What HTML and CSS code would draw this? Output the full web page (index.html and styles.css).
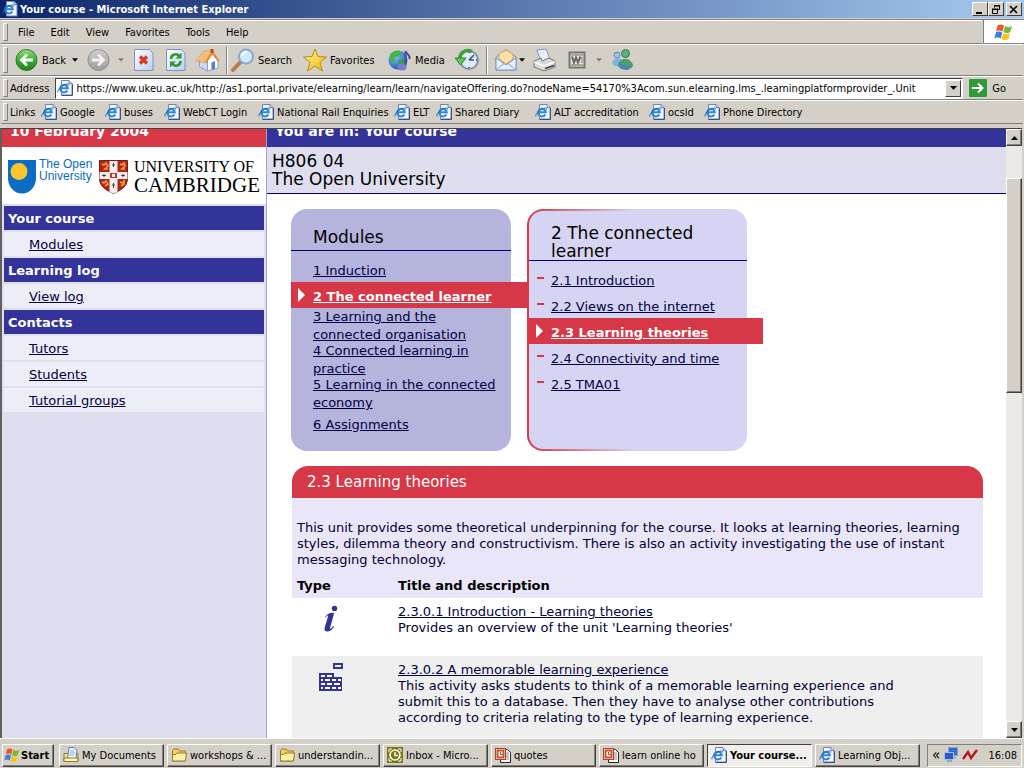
FILE: index.html
```html
<!DOCTYPE html>
<html lang="en">
<head>
    <meta charset="UTF-8">
    <title>Your course - Microsoft Internet Explorer</title>
    <link rel="stylesheet" href="styles.css">
</head>
<body>

    <!-- shared icons -->
    <svg class="defs" width="0" height="0">
        <defs>
            <linearGradient id="gGreen" x1="0" y1="0" x2="0" y2="1"><stop offset="0" stop-color="#8fdc7c"/><stop offset=".5" stop-color="#3fae36"/><stop offset="1" stop-color="#1d7f1c"/></linearGradient>
            <linearGradient id="gGrey" x1="0" y1="0" x2="0" y2="1"><stop offset="0" stop-color="#cfcfcf"/><stop offset="1" stop-color="#9c9c9c"/></linearGradient>
            <linearGradient id="gPage" x1="0" y1="0" x2="1" y2="1"><stop offset="0" stop-color="#fff"/><stop offset="1" stop-color="#b9cdf3"/></linearGradient>
            <linearGradient id="gGold" x1="0" y1="0" x2="1" y2="1"><stop offset="0" stop-color="#fff6a0"/><stop offset="1" stop-color="#f0b400"/></linearGradient>
            <radialGradient id="gGlobe" cx=".35" cy=".3" r=".8"><stop offset="0" stop-color="#7cc4ff"/><stop offset="1" stop-color="#1a4fb4"/></radialGradient>
            <symbol id="ie" viewBox="0 0 16 16">
                <path d="M4.500.5h7.500l3 3v11.500h-10.500z" fill="#f3f7ff" stroke="#6d85bd"/>
                <path d="M12 .5v3h3" fill="#c4d3f2" stroke="#6d85bd"/>
                <path d="M15.500 4v11.500h-11" fill="none" stroke="#35508f"/>
                <path d="M10.300 10.500a3.800 3.800 0 1 1 .500-2.200h-7" fill="none" stroke="#2a86d8" stroke-width="2"/>
                <path d="M1 12.500c-1-2 3-7.500 9.500-8.500 1.200 0 1.500.700 1.200 1.500" fill="none" stroke="#1f63b8"/>
            </symbol>
            <symbol id="flag" viewBox="0 0 20 18">
                <path d="M3.500 2.500c2-1.500 4-1.500 6.500 0l-1.500 6c-2.500-1.500-4.500-1.500-6.500 0z" fill="#e8592b"/>
                <path d="M11 3c2.500 1.500 4.500 1.500 7 0l-1.700 6c-2.300 1.500-4.500 1.500-6.800 0z" fill="#78b832"/>
                <path d="M1.800 9.500c2-1.500 4-1.500 6.500 0l-1.500 6c-2.500-1.500-4.500-1.500-6.500 0z" fill="#3c7fe0"/>
                <path d="M9.200 10c2.500 1.500 4.500 1.500 6.800 0l-1.600 6c-2.400 1.500-4.500 1.500-6.800 0z" fill="#f7c51c"/>
            </symbol>
            <symbol id="folder" viewBox="0 0 16 16">
                <path d="M1.500 14v-10.500l1.500-1.500h4l1.500 2h6v10z" fill="#f3cf5a" stroke="#9c7a20"/>
                <path d="M1.500 14v-6.500h3l1.500-1.500h9.500l-1 8z" fill="#fdf0a8" stroke="#9c7a20"/>
            </symbol>
            <symbol id="ppt" viewBox="0 0 16 16">
                <path d="M5.500 2.500h7l3 3v10h-10z" fill="#fff" stroke="#222"/>
                <path d="M7 6h7M7 8h7M7 10h7M7 12h7" stroke="#888"/>
                <rect x=".5" y="1.500" width="10" height="11" fill="#fff" stroke="#b8401f"/>
                <rect x="2.500" y="3.500" width="6" height="7" fill="none" stroke="#c4512c" stroke-width="2"/>
                <path d="M5.500 5v2.500h2" fill="none" stroke="#b8401f"/>
            </symbol>
            <symbol id="down" viewBox="0 0 7 4"><path d="M0 0h7l-3.500 4z"/></symbol>
        </defs>
    </svg>

    <header class="titlebar">
        <svg class="ic16"><use href="#ie"/></svg>
        <h1>Your course - Microsoft Internet Explorer</h1>
        <div class="winbtns">
            <button class="winbtn" aria-label="Minimize"><svg width="10" height="9"><path d="M1 7h6v2h-6z"/></svg></button>
            <button class="winbtn" aria-label="Restore"><svg width="10" height="9" fill="none" stroke="#000"><path d="M3.500 2.500v-2h5v4h-2M3 1h6"/><path d="M1.500 4.500h5v4h-5zM1 4h6"/></svg></button>
            <button class="winbtn close" aria-label="Close"><svg width="10" height="9"><path d="M1 1l7 7M8 1l-7 7" stroke="#000" stroke-width="1.600"/></svg></button>
        </div>
    </header>

    <div class="menurow">
        <nav class="bar menu">
            <a href="#">File</a>
            <a href="#">Edit</a>
            <a href="#">View</a>
            <a href="#">Favorites</a>
            <a href="#">Tools</a>
            <a href="#">Help</a>
        </nav>
        <div class="brand"><svg width="20" height="18"><use href="#flag"/></svg></div>
    </div>

    <div class="bar toolbar">
        <button class="tool">
            <svg width="24" height="24"><circle cx="11.500" cy="12" r="10.500" fill="url(#gGreen)" stroke="#2c7a2a"/><path d="M18 12h-11M12 6.500l-5.500 5.500 5.500 5.500" fill="none" stroke="#fff" stroke-width="2.800"/></svg>
            Back
        </button>
        <button class="tool" aria-label="Back history"><svg width="6" height="4"><use href="#down"/></svg></button>
        <button class="tool" aria-label="Forward"><svg width="24" height="24"><circle cx="11.500" cy="12" r="10.500" fill="url(#gGrey)" stroke="#8f8f8f"/><path d="M5 12h11M11 6.500l5.500 5.500-5.500 5.500" fill="none" stroke="#f2f2f2" stroke-width="2.800"/></svg></button>
        <button class="tool off" aria-label="Forward history"><svg width="6" height="4"><use href="#down"/></svg></button>
        <button class="tool" aria-label="Stop"><svg width="20" height="24"><path d="M.5 1.500h15l3.500 3.500v17.500h-18.500z" fill="url(#gPage)" stroke="#7e94c4"/><path d="M6 8.500l7 7M13 8.500l-7 7" stroke="#dd3a1c" stroke-width="3.500"/></svg></button>
        <button class="tool" aria-label="Refresh"><svg width="20" height="24"><path d="M.5 1.500h15l3.500 3.500v17.500h-18.500z" fill="url(#gPage)" stroke="#7e94c4"/><path d="M5 11c0-5 6-6 8-3" fill="none" stroke="#2b9a30" stroke-width="2.600"/><path d="M15.500 4.500v6h-6z" fill="#2b9a30"/><path d="M14.500 13c0 5-6 6-8 3" fill="none" stroke="#2b9a30" stroke-width="2.600"/><path d="M4 19.500v-6h6z" fill="#2b9a30"/></svg></button>
        <button class="tool" aria-label="Home"><svg width="24" height="24"><path d="M3.500 11v8l8 4v-10z" fill="#c7d9f6" stroke="#8ca1cb"/><path d="M11.500 23v-11l5-6 5.500 7v7z" fill="#fff" stroke="#8ca1cb"/><path d="M0 12.500l8-9.500 8.500-1-5.500 9-1.500 4z" fill="#f6bf78" stroke="#cf9248" stroke-width=".6"/><path d="M16.500 2l7 10.500-1.500 1.500-5.500-7.500-6 8.500-1.500-1z" fill="#e88f3e"/><path d="M14.500 1h3v4h-3z" fill="#bb4a27"/><path d="M15.500 14.500l3.500-1.500v8l-3.500 1z" fill="#5b7fc9"/></svg></button>
        <i class="sep"></i>
        <button class="tool">
            <svg width="24" height="24"><path d="M2 22l8-8.500" stroke="#b97a4c" stroke-width="4" stroke-linecap="round"/><circle cx="15" cy="8.500" r="7" fill="#d2ebfc" stroke="#86a9cf" stroke-width="2"/><path d="M11 8c0-3 3-4.500 5-4" fill="none" stroke="#fff" stroke-width="2"/></svg>
            Search
        </button>
        <button class="tool">
            <svg width="24" height="24"><path d="M12 1l3 7.500 8.500.500-6.500 5.500 2.500 8.500-7.500-5-7.500 5 2.500-8.500-6.500-5.500 8.500-.500z" fill="url(#gGold)" stroke="#bd8b12"/></svg>
            Favorites
        </button>
        <button class="tool">
            <svg width="24" height="24"><circle cx="10" cy="12" r="9.500" fill="url(#gGlobe)"/><path d="M2 7c3-5 9-5 12-3l-3 4-4 1-1 6-3-1z" fill="#45b83c"/><path d="M11 12l5-1 1 4-4 5-3-2z" fill="#35a539"/><path d="M17.500 18v-15c1 4 5 3 4 8" fill="none" stroke="#454d9f" stroke-width="2"/><ellipse cx="14" cy="19" rx="4.500" ry="3.500" fill="#777dc9"/></svg>
            Media
        </button>
        <button class="tool" aria-label="History"><svg width="24" height="24"><circle cx="14" cy="12" r="9" fill="#dceafa" stroke="#8191a7" stroke-width="2"/><path d="M14 12l5-5M14 12h5" stroke="#3a557e" stroke-width="1.600"/><path d="M14 5v-1M14 20v-1M21 12h1" stroke="#486890" stroke-width="2"/><path d="M17 3.500c-7-3-13 2-12 8" fill="none" stroke="#39a338" stroke-width="3.500"/><path d="M0 10h11l-5.500 7z" fill="#63c65a" stroke="#2c832b"/></svg></button>
        <i class="sep"></i>
        <button class="tool" aria-label="Mail"><svg width="22" height="24"><path d="M1 9l10-7.500 10 7.500v13h-20z" fill="#c7dcf8" stroke="#6e8bc0"/><path d="M4 11v-5l7-4 7 4v5l-7 5z" fill="#ffe0ab" stroke="#e0a050"/><path d="M1 10l10 7 10-7v12h-20z" fill="#e6f2ff" stroke="#7b98cc"/><path d="M1 22l8-6.500M21 22l-8-6.500" stroke="#7b98cc"/></svg></button>
        <button class="tool" aria-label="Mail options"><svg width="6" height="4"><use href="#down"/></svg></button>
        <button class="tool" aria-label="Print"><svg width="24" height="24"><path d="M4 2l9-1 4 10-9 3z" fill="#e5f0ff" stroke="#8297bf"/><path d="M1 13l7-3 1 3 7-3 6 3v6l-11 4-10-4z" fill="#d9d9d9" stroke="#777"/><path d="M1 14l10 4 11-4" fill="none" stroke="#fff" stroke-width="1.500"/><path d="M12 20.500l9-3" stroke="#444" stroke-width="1.500"/></svg></button>
        <button class="tool" aria-label="Edit"><svg width="18" height="18"><rect x="1.500" y="1.500" width="15" height="15" fill="#e2e0da" stroke="#77756f" stroke-width="2"/><path d="M3 4h12M3 14h12M13 7h2M13 9h2M13 11h2" stroke="#77756f"/><path d="M4 5.500l2 6 2-5 2 5 2.500-6" fill="none" stroke="#6a6862" stroke-width="2"/></svg></button>
        <button class="tool off" aria-label="Edit options"><svg width="6" height="4"><use href="#down"/></svg></button>
        <button class="tool" aria-label="Messenger"><svg width="24" height="24"><circle cx="7" cy="7" r="3" fill="#9cc4e8" stroke="#5d8ab5"/><path d="M2 15c0-5 9-7 11-1l-4 4c-3 0-6 0-7-3z" fill="#7fb1db"/><circle cx="15.500" cy="5.500" r="4" fill="#62ad7c" stroke="#357b50"/><path d="M8 19c0-10 12-11 15-2 0 5-10 6-15 2z" fill="#4e9d75"/><path d="M9 14c3 4 8 5 12 4l-3 4-7-1z" fill="#4c80b9"/></svg></button>
    </div>

    <form class="bar address">
        <label for="url">Address</label>
        <div class="combo">
            <svg class="ic16"><use href="#ie"/></svg>
            <input type="text" id="url" value="https://www.ukeu.ac.uk/http://as1.portal.private/elearning/learn/learn/navigateOffering.do?nodeName=54170%3Acom.sun.elearning.lms_.learningplatformprovider_.Unit">
            <button type="button" class="drop" aria-label="Show addresses"><svg width="7" height="4"><use href="#down"/></svg></button>
        </div>
        <button type="button" class="go"><svg width="18" height="18"><rect width="18" height="18" rx="1" fill="#2f9a37"/><path d="M3 9h10M9 4.500l4.500 4.500-4.500 4.500" fill="none" stroke="#fff" stroke-width="2"/></svg>Go</button>
    </form>

    <nav class="bar links">
        <span>Links</span>
        <a href="#"><svg class="ic16"><use href="#ie"/></svg>Google</a>
        <a href="#"><svg class="ic16"><use href="#ie"/></svg>buses</a>
        <a href="#"><svg class="ic16"><use href="#ie"/></svg>WebCT Login</a>
        <a href="#"><svg class="ic16"><use href="#ie"/></svg>National Rail Enquiries</a>
        <a href="#"><svg class="ic16"><use href="#ie"/></svg>ELT</a>
        <a href="#"><svg class="ic16"><use href="#ie"/></svg>Shared Diary</a>
        <a href="#"><svg class="ic16"><use href="#ie"/></svg>ALT accreditation</a>
        <a href="#"><svg class="ic16"><use href="#ie"/></svg>ocsld</a>
        <a href="#"><svg class="ic16"><use href="#ie"/></svg>Phone Directory</a>
    </nav>

    <div class="viewport">
        <aside class="sidebar">
            <div class="strip date"><span>10 February 2004</span></div>
            <div class="logos">
                <svg width="28" height="34"><path d="M0 0h28v18a14 15.500 0 0 1-28 0z" fill="#0a6cc4"/><circle cx="11" cy="11.500" r="8.500" fill="#fbc52d"/></svg>
                <div class="ou">The Open<br>University</div>
                <svg class="shield" width="29" height="34">
                    <path d="M.5.5h28v18c0 8-7 12-14 15-7-3-14-7-14-15z" fill="#b5231c" stroke="#7c1b15"/>
                    <path d="M10.500 1h8v11h10v7h-10v13l-4 1.500-4-1.500v-13h-10v-7h10z" fill="#f5eeee"/>
                    <path d="M3 4l2 1 2-2 2 3-3 3h3M21 4l2 1 2-2 1 3-3 3h3M3 22l2 1 2-2 2 3-3 2M21 22l2 1 2-2 0 3-3 2" fill="none" stroke="#e5a52e" stroke-width="1.600"/>
                    <path d="M11 13h7v5h-7z" fill="#c8332a"/><path d="M13 14h3v3h-3z" fill="#f5eeee"/>
                    <path d="M14.500 3v4M13 5h3M14.500 23v5M13 25h3M3 15.500h4M5 14v3M22 15.500h4M24 14v3" stroke="#444"/>
                </svg>
                <div class="cam"><span>UNIVERSITY OF</span><b>CAMBRIDGE</b></div>
            </div>
            <nav class="sidenav">
                <h2>Your course</h2>
                <div class="entry"><a href="#">Modules</a></div>
                <h2>Learning log</h2>
                <div class="entry"><a href="#">View log</a></div>
                <h2>Contacts</h2>
                <div class="entry"><a href="#">Tutors</a></div>
                <div class="entry"><a href="#">Students</a></div>
                <div class="entry"><a href="#">Tutorial groups</a></div>
            </nav>
        </aside>

        <main class="main">
            <div class="strip where"><span>You are in: Your course</span></div>
            <div class="coursehead">H806 04<br>The Open University</div>

            <div class="panels">
                <section class="panel modules">
                    <h2>Modules</h2>
                    <ul>
                        <li><a href="#">1 Induction</a></li>
                        <li class="current"><a href="#">2 The connected learner</a></li>
                        <li class="two"><a href="#">3 Learning and the<br>connected organisation</a></li>
                        <li class="two"><a href="#">4 Connected learning in<br>practice</a></li>
                        <li class="two"><a href="#">5 Learning in the connected<br>economy</a></li>
                        <li><a href="#">6 Assignments</a></li>
                    </ul>
                </section>
                <section class="panel units">
                    <h2>2 The connected<br>learner</h2>
                    <ul>
                        <li><a href="#">2.1 Introduction</a></li>
                        <li><a href="#">2.2 Views on the internet</a></li>
                        <li class="current"><a href="#">2.3 Learning theories</a></li>
                        <li><a href="#">2.4 Connectivity and time</a></li>
                        <li><a href="#">2.5 TMA01</a></li>
                    </ul>
                </section>
            </div>

            <section class="unit">
                <h2>2.3 Learning theories</h2>
                <p>This unit provides some theoretical underpinning for the course. It looks at learning theories, learning styles, dilemma theory and constructivism. There is also an activity investigating the use of instant messaging technology.</p>
                <table>
                    <thead>
                        <tr><th class="type">Type</th><th>Title and description</th></tr>
                    </thead>
                    <tbody>
                        <tr>
                            <td class="type"><svg width="28" height="32" fill="#333399"><circle cx="18.500" cy="5.500" r="2.700"/><path d="M9 14c3-4 6-4.500 9-4-1 5-3 11-4 15 0 2 2 0 3-2l1 .500c-2 4-5 5-7 5-3 0-2.500-3-2-5l3-10c0-2-1-1-2.500 1z"/></svg></td>
                            <td><a href="#">2.3.0.1 Introduction - Learning theories</a><br>Provides an overview of the unit 'Learning theories'</td>
                        </tr>
                        <tr>
                            <td class="type"><svg width="28" height="32" fill="#333399"><path fill-rule="evenodd" d="M17 2h10v6h-10zM19 4v2h6v-2zM3 12h15v4h8v14h-23z"/><path d="M5 15h4M11 15h5M5 19h2M9 19h5M16 19h4M22 19h3M5 23h4M11 23h5M18 23h6M5 27h2M9 27h5M16 27h4M22 27h3" stroke="#fff" stroke-width="2"/></svg></td>
                            <td><a href="#">2.3.0.2 A memorable learning experience</a><br>This activity asks students to think of a memorable learning experience and submit this to a database. Then they have to analyse other contributions according to criteria relating to the type of learning experience.</td>
                        </tr>
                    </tbody>
                </table>
            </section>
        </main>

        <div class="scrollbar">
            <button aria-label="Scroll up"><svg width="7" height="4"><path d="M0 4h7l-3.500-4z"/></svg></button>
            <div class="track"><div class="thumb"></div></div>
            <button aria-label="Scroll down"><svg width="7" height="4"><use href="#down"/></svg></button>
        </div>
    </div>

    <footer class="taskbar">
        <button class="task start"><svg width="17" height="16" viewBox="0 0 20 18"><use href="#flag"/></svg>Start</button>
        <button class="task"><svg class="ic16"><path d="M1 14.500v-8h14v8z" fill="#f8e28b" stroke="#927629"/><path d="M4.500 11.500l1.500-11h5l3 3-1 8z" fill="#eaf3ff" stroke="#527eb7"/><path d="M7 4h4M7 6h5M6 8h5" stroke="#8cb0dd"/><path d="M1 11h14v3.500h-14z" fill="#fff4bd" stroke="#927629"/></svg>My Documents</button>
        <button class="task"><svg class="ic16"><use href="#folder"/></svg>workshops &amp; ...</button>
        <button class="task"><svg class="ic16"><use href="#folder"/></svg>understandin...</button>
        <button class="task"><svg class="ic16"><rect width="16" height="16" fill="#77770d"/><path d="M2 2h3M2 2v3M14 2h-3M14 2v3M2 14h3M2 14v-3M14 14h-3M14 14v-3" stroke="#fff"/><circle cx="8" cy="8" r="5" fill="#77770d" stroke="#fff" stroke-width="1.600"/><path d="M8 5v3.500h3" fill="none" stroke="#fff" stroke-width="1.400"/></svg>Inbox - Micro...</button>
        <button class="task"><svg class="ic16"><use href="#ppt"/></svg>quotes</button>
        <button class="task"><svg class="ic16"><use href="#ppt"/></svg>learn online ho</button>
        <button class="task pressed"><svg class="ic16"><use href="#ie"/></svg>Your course...</button>
        <button class="task"><svg class="ic16"><use href="#ie"/></svg>Learning Obj...</button>
        <div class="tray">
            <span class="more">«</span>
            <svg class="ic16"><rect x="5.500" y=".5" width="9" height="8" fill="#2f6cd8" stroke="#8aa0c8"/><path d="M8 9.500h5v2h-5z" fill="#9ab"/><rect x="1.500" y="5.500" width="9" height="7" fill="#2b5cc4" stroke="#a9c1e8"/><path d="M4 13h5v2h-5z" fill="#8ea3c3"/></svg>
            <svg width="16" height="12"><path d="M1 10l5-7 3 6 6-8" fill="none" stroke="#b3161b" stroke-width="2.400"/></svg>
            <span class="clock">16:08</span>
        </div>
    </footer>

</body>
</html>
```
FILE: styles.css
```css
* {
    box-sizing: border-box;
}
body {
    margin: 0;
    height: 100vh;
    display: flex;
    flex-direction: column;
    overflow: hidden;
    background-color: #d4d0c8;
    font-family: "DejaVu Sans Condensed", "DejaVu Sans", sans-serif;
    font-size: 11px;
    color: #000;
}
h1, h2, p, ul {
    margin: 0;
    padding: 0;
}
button, input {
    font: inherit;
    color: inherit;
    margin: 0;
    padding: 0;
}
svg {
    display: block;
    flex: none;
}
.defs {
    position: absolute;
}
.ic16 {
    width: 16px;
    height: 16px;
}

/* title bar */
.titlebar {
    flex: none;
    height: 19px;
    display: flex;
    align-items: center;
    padding: 0 2px;
    gap: 2px;
    background: linear-gradient(to right, #0a246a, #a6caf0);
    border-bottom: 1px solid #d4d0c8;
}
.titlebar h1 {
    flex: 1;
    font-size: 11px;
    font-weight: bold;
    color: #fff;
}
.winbtns {
    display: flex;
}
.winbtn {
    width: 16px;
    height: 14px;
    display: flex;
    align-items: center;
    justify-content: center;
    background-color: #d4d0c8;
    border: 1px solid;
    border-color: #fff #404040 #404040 #fff;
}
.close {
    margin-left: 2px;
}

/* tool bars */
.bar {
    flex: none;
    position: relative;
    display: flex;
    align-items: center;
    border-top: 1px solid #fff;
    border-bottom: 1px solid #808080;
    margin: 0 1px;
}
.bar::before {
    content: "";
    position: absolute;
    left: 2px;
    top: 2px;
    bottom: 2px;
    width: 3px;
    border: 1px solid;
    border-color: #fff #808080 #808080 #fff;
}
.bar a {
    color: #000;
    text-decoration: none;
}
.menurow {
    flex: none;
    display: flex;
    border-top: 1px solid #808080;
}
.menu {
    flex: 1;
    height: 24px;
    gap: 16px;
    padding-left: 17px;
}
.brand {
    width: 41px;
    display: flex;
    align-items: center;
    justify-content: center;
    background-color: #fff;
    border-left: 1px solid #808080;
    border-bottom: 1px solid #808080;
}
.toolbar {
    height: 32px;
    display: grid;
    grid-template-columns: 57px 15px 31px 16px 32px 30px 30px 5px 72px 85px 67px 31px 9px 24px 14px 35px 28px 14px auto;
    padding-left: 14px;
}
.tool {
    display: flex;
    align-items: center;
    gap: 3px;
    background: none;
    border: none;
}
.off {
    fill: #808080;
}
.sep {
    width: 2px;
    height: 27px;
    border-left: 1px solid #808080;
    border-right: 1px solid #fff;
}
.address {
    height: 24px;
    padding: 0 17px 0 9px;
    gap: 6px;
}
.combo {
    flex: 1;
    height: 21px;
    display: flex;
    align-items: center;
    background-color: #fff;
    border: 1px solid;
    border-color: #404040 #fff #fff #404040;
    padding: 1px;
    gap: 3px;
}
.combo input {
    flex: 1;
    min-width: 0;
    border: none;
    background: none;
    outline: none;
}
.drop {
    width: 16px;
    height: 17px;
    display: flex;
    align-items: center;
    justify-content: center;
    background-color: #d4d0c8;
    border: 1px solid;
    border-color: #fff #404040 #404040 #fff;
}
.go {
    display: flex;
    align-items: center;
    gap: 5px;
    background: none;
    border: none;
}
.links {
    height: 24px;
    display: grid;
    grid-template-columns: 31px 64px 59px 94px 136px 42px 99px 114px 55px auto;
    padding-left: 9px;
    margin-bottom: 4px;
}
.links a {
    display: flex;
    align-items: center;
    gap: 3px;
}

/* page */
.viewport {
    flex: 1;
    min-height: 0;
    display: flex;
    overflow: hidden;
    margin-right: 2px;
    border-left: 2px solid #606060;
    border-top: 1px solid #404040;
    background-color: #fff;
    font-family: "DejaVu Sans", Verdana, sans-serif;
    font-size: 13px;
    line-height: 16px;
}
.viewport a {
    color: #000044;
}
.sidebar {
    flex: none;
    width: 265px;
    background-color: #dedeef;
    border-right: 1px solid #a3a3d6;
}
.strip {
    height: 18px;
    overflow: hidden;
    display: flex;
    align-items: flex-end;
    padding: 0 8px 8px;
    color: #fff;
    font-size: 14px;
    font-weight: bold;
}
.date {
    background-color: #d63847;
}
.where {
    background-color: #333399;
}
.logos {
    height: 57px;
    display: flex;
    align-items: flex-start;
    padding: 13px 6px 0;
    background-color: #fff;
}
.ou {
    width: 61px;
    padding-left: 3px;
    font-family: "Liberation Sans", Arial, sans-serif;
    font-size: 12px;
    line-height: 12px;
    margin-top: -2px;
    color: #0a6cc4;
}
.shield {
    margin-left: 3px;
}
.cam {
    padding-left: 6px;
    margin-top: -3px;
    font-family: "Liberation Serif", serif;
    line-height: 19px;
    white-space: nowrap;
}
.cam span {
    display: block;
    font-size: 16px;
}
.cam b {
    display: block;
    font-size: 21px;
    font-weight: normal;
}
.sidenav {
    display: flex;
    flex-direction: column;
    gap: 2px;
    padding: 2px;
}
.sidenav h2 {
    padding: 5px 4px 3px;
    font-size: 13px;
    background-color: #333399;
    color: #fff;
}
.entry {
    padding: 5px 25px 3px;
    background-color: #ededf8;
}
.main {
    flex: 1;
    min-width: 0;
}
.coursehead {
    height: 47px;
    padding: 5px;
    font-size: 17px;
    line-height: 18px;
    background-color: #dedeef;
    border-bottom: 1px solid #000066;
}

/* the two menu panels */
.panels {
    display: flex;
    gap: 16px;
    padding: 15px 24px;
}
.panel {
    width: 220px;
    height: 242px;
    border-radius: 16px;
}
.panel h2 {
    font-size: 17px;
    font-weight: normal;
    line-height: 18px;
    border-bottom: 1px solid #000066;
}
.panel ul {
    list-style: none;
    padding-top: 5px;
    line-height: 18px;
    white-space: nowrap;
}
.panel li {
    position: relative;
    height: 26px;
    display: flex;
    align-items: center;
    padding: 3px 0 0 22px;
}
.panel .two {
    height: 34px;
    padding-top: 2px;
}
.panel .current {
    margin-right: -16px;
    background-color: #d63847;
    font-weight: bold;
}
.panel .current a {
    color: #fff;
}
.panel .current::before {
    content: "";
    position: absolute;
    left: 7px;
    top: 6px;
    border: 7px solid transparent;
    border-left-color: #fff;
    border-right-width: 0;
}
.modules {
    background-color: #b5b4dc;
}
.modules h2 {
    padding: 19px 22px 4px;
}
.units {
    background: linear-gradient(#d6d4f3, #d6d4f3) padding-box, linear-gradient(to right, #d63847, #d6d4f3 50%) border-box;
    border: 2px solid transparent;
    border-right-width: 0;
}
.units h2 {
    padding: 13px 22px 0;
}
.units li::before {
    content: "";
    position: absolute;
    left: 8px;
    top: 11px;
    width: 7px;
    height: 2px;
    background-color: #d63847;
}
.units .current::before {
    width: 0;
    height: 0;
    background: none;
}

/* unit contents */
.unit {
    margin: 0 23px 0 25px;
    color: #000033;
}
.unit h2 {
    padding: 8px 15px;
    font-size: 15px;
    font-weight: normal;
    background-color: #d63847;
    color: #fff;
    border-radius: 16px 16px 0 0;
}
.unit p {
    padding: 22px 5px 5px;
    background-color: #e8e6f8;
}
.unit table {
    width: 100%;
    border-collapse: collapse;
}
.unit th {
    padding: 5px 0 4px;
    text-align: left;
    background-color: #e8e6f8;
    color: #000;
}
.unit .type {
    width: 106px;
    padding-left: 5px;
}
.unit td {
    height: 58px;
    padding: 6px 70px 0 0;
    vertical-align: top;
}
.unit td.type {
    padding: 5px 0 0 24px;
}
.unit tbody tr:nth-child(even) td {
    height: 90px;
    background-color: #efefef;
}

/* scroll bar */
.scrollbar {
    flex: none;
    width: 16px;
    display: flex;
    flex-direction: column;
    background-color: #ebe9e5;
}
.scrollbar button, .thumb {
    background-color: #d4d0c8;
    border: 1px solid;
    border-color: #fff #404040 #404040 #fff;
    box-shadow: inset -1px -1px #808080;
}
.scrollbar button {
    height: 17px;
    display: flex;
    align-items: center;
    justify-content: center;
}
.track {
    flex: 1;
    padding-top: 32px;
}
.thumb {
    height: 215px;
}

/* task bar */
.taskbar {
    flex: none;
    height: 30px;
    display: flex;
    align-items: center;
    gap: 3px;
    padding: 3px 2px 0;
    border-top: 1px solid #fff;
}
.task {
    width: 105px;
    height: 23px;
    display: flex;
    align-items: center;
    gap: 3px;
    padding: 0 3px;
    background-color: #d4d0c8;
    white-space: nowrap;
    border: 1px solid;
    border-color: #fff #404040 #404040 #fff;
    box-shadow: inset -1px -1px #808080;
}
.start {
    width: 52px;
    gap: 0;
    padding: 0 1px;
    margin-right: 2px;
    font-weight: bold;
}
.pressed {
    font-weight: bold;
    background-color: #f1efec;
    border-color: #404040 #fff #fff #404040;
    box-shadow: none;
}
.tray {
    flex: 1;
    height: 23px;
    margin-left: 4px;
    display: flex;
    align-items: center;
    gap: 3px;
    padding: 0 4px;
    border: 1px solid;
    border-color: #808080 #fff #fff #808080;
}
.more {
    font-size: 15px;
    line-height: 16px;
}
.clock {
    margin-left: auto;
}
```
